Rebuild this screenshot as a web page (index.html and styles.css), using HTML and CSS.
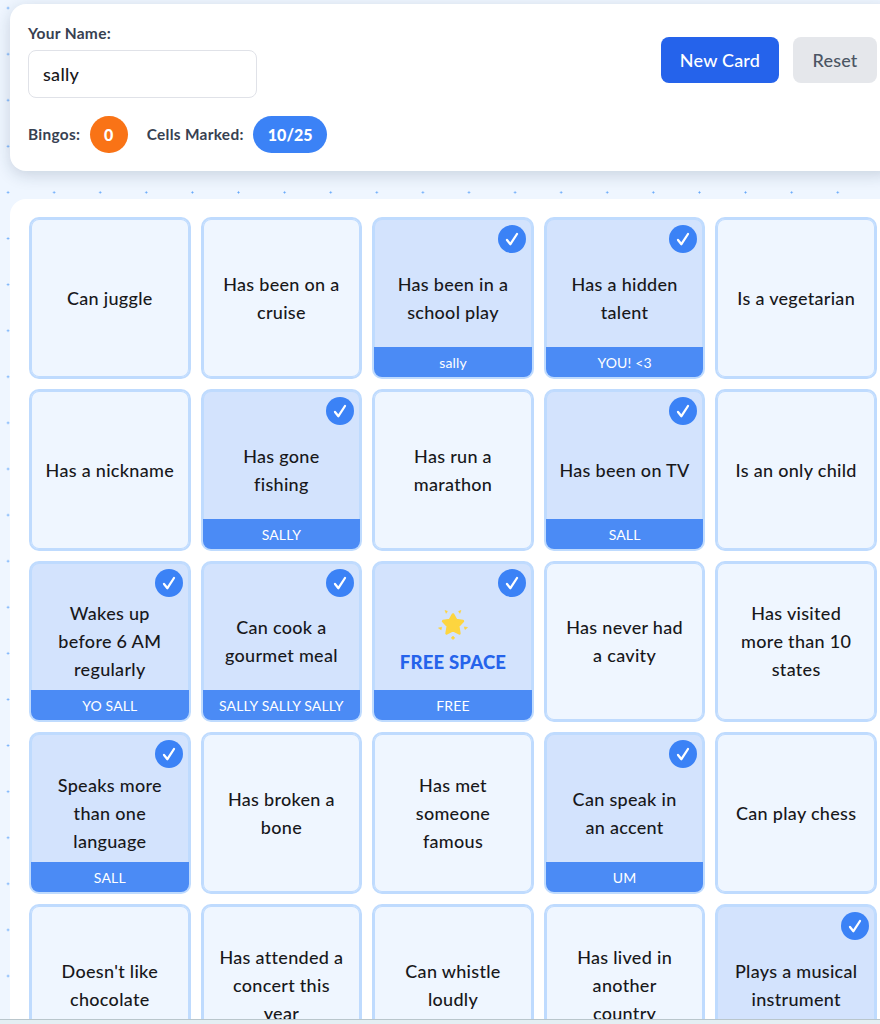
FILE: index.html

```html
<!DOCTYPE html>
<html lang="en">
<head>
<meta charset="UTF-8">
<meta name="viewport" content="width=device-width, initial-scale=1.0">
<title>Bingo</title>
<link rel="stylesheet" href="styles.css">
</head>
<body>
<svg class="defs" width="0" height="0">
  <symbol id="check" viewBox="0 0 28 28">
    <path d="M9 15l3.400 4.200L19 9" fill="none" stroke="#fff" stroke-width="2.300" stroke-linecap="round" stroke-linejoin="round"/>
  </symbol>
</svg>
<div class="page">
  <div class="panel top">
    <div class="top-row">
      <div class="name-box">
        <label class="name-label" for="name">Your Name:</label>
        <input id="name" class="name-input" type="text" value="sally">
      </div>
      <div class="buttons">
        <button class="btn btn-new">New Card</button>
        <button class="btn btn-reset">Reset</button>
      </div>
    </div>
    <div class="stats">
      <span class="stat-label">Bingos:</span>
      <span class="count count-orange">0</span>
      <span class="stat-label stat-gap">Cells Marked:</span>
      <span class="count count-blue">10/25</span>
    </div>
  </div>

  <div class="panel board">
    <div class="cell"><span class="txt">Can juggle</span></div>
    <div class="cell"><span class="txt">Has been on a cruise</span></div>
    <div class="cell on"><svg class="tick"><use href="#check"/></svg><span class="txt">Has been in a school play</span><span class="who">sally</span></div>
    <div class="cell on"><svg class="tick"><use href="#check"/></svg><span class="txt">Has a hidden talent</span><span class="who">YOU! &lt;3</span></div>
    <div class="cell"><span class="txt">Is a vegetarian</span></div>

    <div class="cell"><span class="txt">Has a nickname</span></div>
    <div class="cell on"><svg class="tick"><use href="#check"/></svg><span class="txt">Has gone fishing</span><span class="who">SALLY</span></div>
    <div class="cell"><span class="txt">Has run a marathon</span></div>
    <div class="cell on"><svg class="tick"><use href="#check"/></svg><span class="txt">Has been on TV</span><span class="who">SALL</span></div>
    <div class="cell"><span class="txt">Is an only child</span></div>

    <div class="cell on"><svg class="tick"><use href="#check"/></svg><span class="txt">Wakes up before 6 AM regularly</span><span class="who">YO SALL</span></div>
    <div class="cell on"><svg class="tick"><use href="#check"/></svg><span class="txt">Can cook a gourmet meal</span><span class="who">SALLY SALLY SALLY</span></div>
    <div class="cell on"><svg class="tick"><use href="#check"/></svg>
      <span class="txt free">
        <svg class="star" viewBox="0 0 32 32" width="32" height="32">
          <path fill="#fdd53f" stroke="#fdd53f" stroke-width="2.600" stroke-linejoin="round" d="M16 6.500l3.200 5.600 6.700 1-4.700 5.100 1.200 7.200-6.400-3.400-6.400 3.400 1.200-7.200-4.700-5.100 6.700-1z"/>
          <path fill="#fdd53f" stroke="#fdd53f" stroke-width=".6" stroke-linejoin="round" d="M8 2.500l2.400.8-1.200 2zM24 2.500l-2.400.8 1.200 2zM1.500 20l3.200-.8-.6 2.600zM30.500 19.500l-3.200-.6.700 2.600zM16 28l1.800 2-1.800 1.500-1.800-1.500z"/>
        </svg>
        <span class="free-label">FREE SPACE</span>
      </span>
      <span class="who">FREE</span>
    </div>
    <div class="cell"><span class="txt">Has never had<br>a cavity</span></div>
    <div class="cell"><span class="txt">Has visited more than 10 states</span></div>

    <div class="cell on"><svg class="tick"><use href="#check"/></svg><span class="txt">Speaks more than one language</span><span class="who">SALL</span></div>
    <div class="cell"><span class="txt">Has broken a bone</span></div>
    <div class="cell"><span class="txt">Has met someone famous</span></div>
    <div class="cell on"><svg class="tick"><use href="#check"/></svg><span class="txt">Can speak in<br>an accent</span><span class="who">UM</span></div>
    <div class="cell"><span class="txt">Can play chess</span></div>

    <div class="cell"><span class="txt">Doesn't like chocolate</span></div>
    <div class="cell"><span class="txt">Has attended a concert this year</span></div>
    <div class="cell"><span class="txt">Can whistle loudly</span></div>
    <div class="cell"><span class="txt">Has lived in<br>another<br>country</span></div>
    <div class="cell on"><svg class="tick"><use href="#check"/></svg><span class="txt">Plays a musical instrument</span></div>
  </div>
</div>
<div class="bottom-strip"></div>
</body>
</html>
```

FILE: styles.css

```css
html, body { height: 100%; }
body {
  margin: 0;
  overflow: hidden;
  font-family: "Lato", "Noto Sans", sans-serif;
  color: #18181b;
  background-color: #eff6ff;
  background-image: radial-gradient(#60a5fa .9px, transparent 1.1px);
  background-size: 46.100px 46.100px;
  background-position: -15px -15px;
}
.defs { position: absolute; }
.page { width: 885px; padding: 4px 0 0 10px; }
.panel { background: #fff; border-radius: 16px; }
.top {
  height: 167px;
  box-sizing: border-box;
  padding: 18px 18px 0;
  margin-bottom: 28px;
  box-shadow: 0 4px 16px rgba(30, 50, 80, .18);
}
.top-row { display: flex; justify-content: space-between; align-items: center; }
.name-label { display: block; font-size: 15.500px; font-weight: 700; letter-spacing: .3px; color: #374151; line-height: 22px; margin-bottom: 6px; }
.name-input {
  display: block;
  width: 229px;
  height: 48px;
  box-sizing: border-box;
  padding: 0 14px;
  border: 1px solid #e0e2e8;
  border-radius: 8px;
  font: 500 18px "Lato", sans-serif;
  letter-spacing: .3px;
  color: #18181b;
}
.buttons { display: flex; gap: 14px; }
.btn { height: 46px; border: 0; border-radius: 8px; font: 500 18px "Lato", sans-serif; letter-spacing: .2px; }
.btn-new { width: 118px; background: #2563eb; color: #fff; }
.btn-reset { width: 84px; background: #e5e7eb; color: #4b5563; }
.stats { display: flex; align-items: center; margin-top: 18px; }
.stat-label { font-size: 15.400px; font-weight: 700; letter-spacing: .3px; color: #374151; margin-bottom: 2px; }
.stat-gap { margin-left: 19px; }
.count { height: 37px; display: flex; align-items: center; justify-content: center; color: #fff; font-weight: 900; font-size: 16px; border-radius: 19px; margin-left: 9.500px; }
.count-orange { width: 38px; background: #f97316; }
.count-blue { width: 74px; background: #3b82f6; }
.board {
  display: grid;
  grid-template-columns: repeat(5, 161.600px);
  grid-auto-rows: 161.600px;
  gap: 10px;
  padding: 18.400px 19px 0;
  height: 900px;
}
.cell {
  position: relative;
  box-sizing: border-box;
  display: flex;
  border: 2px solid #bfdbfe;
  border-radius: 10px;
  background: #eff6ff;
  box-shadow: inset 0 0 0 1px #bfdbfe;
  overflow: hidden;
}
.cell.on { background: #d3e3fd; }
.txt {
  flex: 1;
  align-self: center;
  text-align: center;
  padding: 0 12px;
  font-size: 18px;
  font-weight: 500;
  letter-spacing: .3px;
  line-height: 28px;
}
.tick {
  position: absolute;
  top: 6px;
  right: 6px;
  width: 28px;
  height: 28px;
  border-radius: 50%;
  background: #3b82f6;
}
.who {
  position: absolute;
  left: 0;
  right: 0;
  bottom: 0;
  height: 30px;
  background: #4b8bf5;
  color: #fff;
  font-size: 14px;
  letter-spacing: .15px;
  line-height: 31px;
  text-align: center;
}
.free { display: flex; flex-direction: column; align-items: center; }
.star { display: block; margin-bottom: 10px; }
.free-label { color: #2563eb; font-size: 18.500px; font-weight: 900; letter-spacing: .2px; line-height: 24px; }
.bottom-strip {
  position: fixed;
  left: 0;
  right: 0;
  bottom: 0;
  height: 4px;
  background: #e4eef3;
  border-top: 1px solid #b9c6cc;
}
```
